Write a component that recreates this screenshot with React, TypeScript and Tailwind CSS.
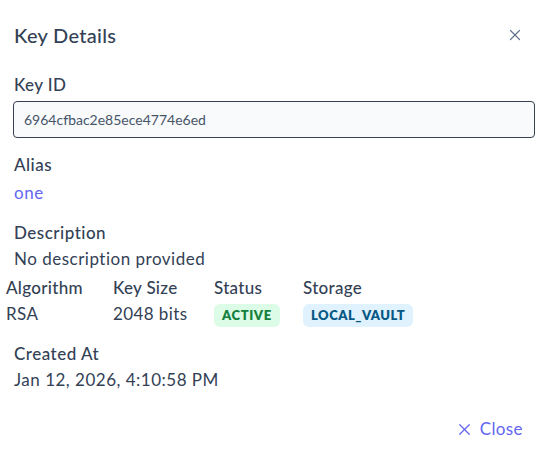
import {X} from "lucide-react";

type TField = {
    label: string
    value: string
    badge?: "green" | "blue"
}

const rowFields: TField[] = [
    {label: "Algorithm", value: "RSA"},
    {label: "Key Size", value: "2048 bits"},
    {label: "Status", value: "ACTIVE", badge: "green"},
    {label: "Storage", value: "LOCAL_VAULT", badge: "blue"},
]

function Badge({value, color}: { value: string, color: "green" | "blue" }) {
    return (
        <span
            className={
                color === "green"
                    ? "inline-flex items-center h-[23px] px-[8px] mt-[3px] rounded-md bg-[#dcfce7] text-[#15803d] text-[13px] font-extrabold tracking-[0.6px]"
                    : "inline-flex items-center h-[23px] px-[8px] mt-[3px] rounded-md bg-[#e0f2fe] text-[#075985] text-[13px] font-extrabold tracking-[0.5px]"
            }>
            {value}
        </span>
    )
}

export default function App() {
    return (
        <div className="w-[550px] h-[464px] bg-white text-[#334155] font-['Lato','Noto_Sans',sans-serif] flex flex-col">
            <div className="flex items-center justify-between pl-[14px] pr-[26px] pt-[22px]">
                <h2 className="text-[20px] leading-[26px] font-medium tracking-[0.3px]">Key Details</h2>
                <X size={18} strokeWidth={1.6} className="text-[#64748b]"/>
            </div>

            <div className="px-[13px] mt-[24px]">
                <div className="text-[17px] leading-[26px] font-medium pl-[1px] tracking-[0.4px]">Key ID</div>
                <div
                    className="mt-[3px] h-[37px] w-[522px] border border-[#374151] rounded-[4px] bg-[#f8fafc] flex items-center px-[10px] text-[14px] text-[#475569]">
                    6964cfbac2e85ece4774e6ed
                </div>
            </div>

            <div className="px-[14px] mt-[14px]">
                <div className="text-[17px] leading-[26px] font-medium tracking-[0.5px]">Alias</div>
                <div className="mt-[2px] text-[17px] leading-[26px] text-[#6366f1] tracking-[0.5px]">one</div>
            </div>

            <div className="px-[14px] mt-[14px]">
                <div className="text-[17px] leading-[26px] font-medium tracking-[0.5px]">Description</div>
                <div className="text-[17px] leading-[26px] tracking-[0.5px]">No description provided</div>
            </div>

            <div className="flex pl-[6px] mt-[3px]">
                {rowFields.map(item => (
                    <div key={item.label}
                         className={item.label === "Algorithm" ? "w-[107px]" : item.label === "Key Size" ? "w-[101px]" : item.label === "Status" ? "w-[89px]" : ""}>
                        <div className="text-[17px] leading-[26px] font-medium tracking-[0.3px]">{item.label}</div>
                        {item.badge ? <Badge value={item.value} color={item.badge}/> :
                            <div className="text-[17px] leading-[26px] tracking-[0.4px]">{item.value}</div>}
                    </div>
                ))}
            </div>

            <div className="px-[14px] mt-[14px]">
                <div className="text-[17px] leading-[26px] font-medium tracking-[0.5px]">Created At</div>
                <div className="text-[17px] leading-[26px] tracking-[0.5px]">Jan 12, 2026, 4:10:58 PM</div>
            </div>

            <div className="flex justify-end pr-[27px] mt-[23px]">
                <button className="flex items-center gap-[6px] text-[#6366f1] text-[17px] leading-[26px] tracking-[0.4px]">
                    <X size={19} strokeWidth={1.6}/>
                    Close
                </button>
            </div>
        </div>
    )
}
